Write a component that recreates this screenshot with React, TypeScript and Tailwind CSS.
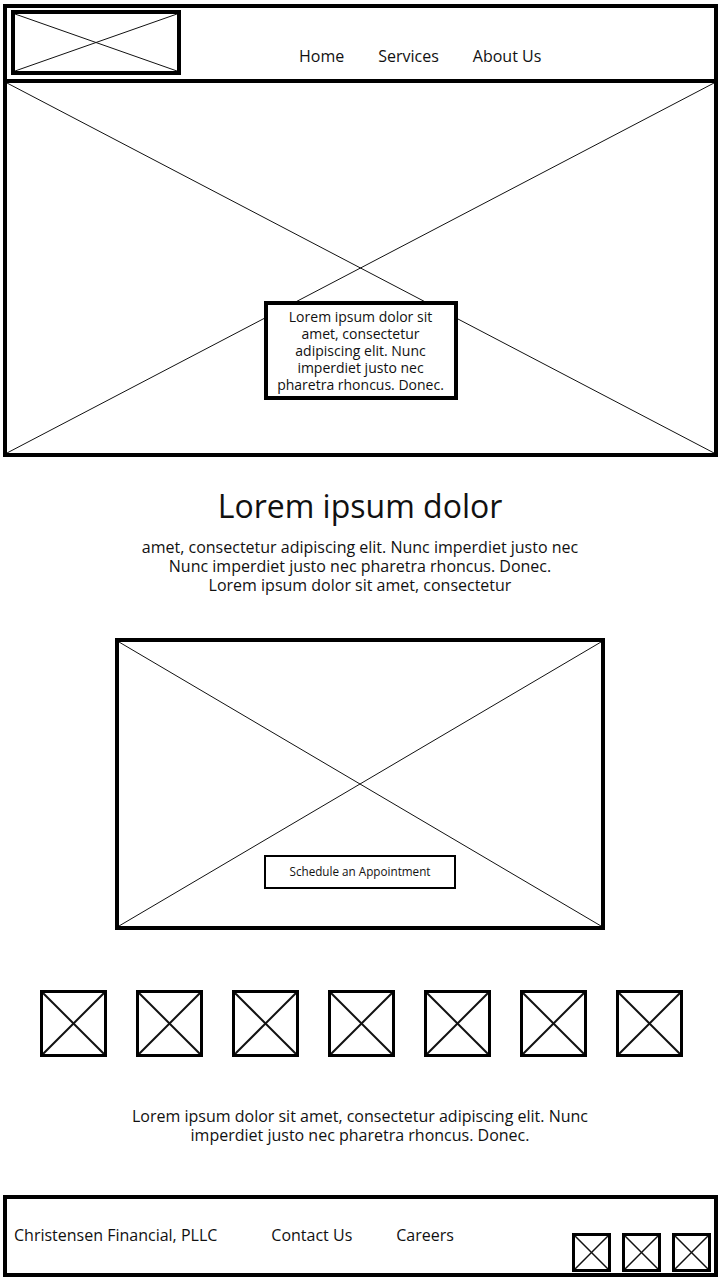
import type { ReactNode } from 'react'

function Cross({ stroke = 1 }: { stroke?: number }) {
  return (
    <svg className="absolute inset-0 h-full w-full" preserveAspectRatio="none" viewBox="0 0 100 100">
      <line x1="0" y1="0" x2="100" y2="100" stroke="#111" strokeWidth={stroke} vectorEffect="non-scaling-stroke" />
      <line x1="100" y1="0" x2="0" y2="100" stroke="#111" strokeWidth={stroke} vectorEffect="non-scaling-stroke" />
    </svg>
  )
}

function Placeholder({ className, stroke, children }: { className: string; stroke?: number; children?: ReactNode }) {
  return (
    <div className={`relative border-black bg-white ${className}`}>
      <Cross stroke={stroke} />
      {children}
    </div>
  )
}

const icons = [0, 1, 2, 3, 4, 5, 6]

export default function App() {
  return (
    <div className="min-h-[1280px] w-[720px] bg-white text-[#111]" style={{ fontFamily: '"Open Sans", "Liberation Sans", sans-serif' }}>
      <div className="ml-[3px] w-[715px] pt-[4px]">
        {/* header */}
        <header className="flex h-[79px] border-4 border-black pl-[4px]">
          <Placeholder className="mt-[2px] h-[65px] w-[170px] border-4" />
          <nav className="ml-[118px] mt-[37px] flex h-[22px] gap-[34px] text-[16px] leading-[22px]">
            <span>Home</span>
            <span>Services</span>
            <span>About Us</span>
          </nav>
        </header>

        {/* hero */}
        <Placeholder className="flex h-[374px] items-end justify-center border-x-4 border-b-4 pb-[53px]">
          <div className="relative w-[194px] border-4 border-black bg-white px-[4px] py-[3px] text-center text-[14px] leading-[17px]">
            Lorem ipsum dolor sit amet, consectetur adipiscing elit. Nunc imperdiet justo nec pharetra rhoncus. Donec.
          </div>
        </Placeholder>
      </div>

      <h1 className="mt-[29px] text-center text-[32px] leading-[40px]">Lorem ipsum dolor</h1>
      <p className="mt-[12px] text-center text-[16px] leading-[19px]">
        amet, consectetur adipiscing elit. Nunc imperdiet justo nec
        <br />
        Nunc imperdiet justo nec pharetra rhoncus. Donec.
        <br />
        Lorem ipsum dolor sit amet, consectetur
      </p>

      <Placeholder className="ml-[115px] mt-[43px] flex h-[292px] w-[490px] items-end justify-center border-4 pb-[37px]">
        <div className="relative flex h-[34px] w-[192px] items-center justify-center border-2 border-black bg-white text-[11.7px]">
          Schedule an Appointment
        </div>
      </Placeholder>

      <div className="mt-[60px] flex justify-center gap-[29px] pl-[2px]">
        {icons.map((i) => (
          <Placeholder key={i} className="h-[67px] w-[67px] border-[3px]" stroke={2} />
        ))}
      </div>

      <p className="mt-[50px] text-center text-[16px] leading-[19px]">
        Lorem ipsum dolor sit amet, consectetur adipiscing elit. Nunc
        <br />
        imperdiet justo nec pharetra rhoncus. Donec.
      </p>

      {/* footer */}
      <footer className="ml-[3px] mt-[50px] flex h-[82px] w-[715px] border-4 border-black pl-[7px] pr-[3px] pb-[1px]">
        <div className="mt-[25px] flex h-[22px] text-[16px] leading-[22px]">
          <span>Christensen Financial, PLLC</span>
          <span className="ml-[54px]">Contact Us</span>
          <span className="ml-[44px]">Careers</span>
        </div>
        <div className="ml-auto flex gap-[11px] self-end">
          {[0, 1, 2].map((i) => (
            <Placeholder key={i} className="h-[39px] w-[39px] border-[3px]" stroke={1.5} />
          ))}
        </div>
      </footer>
    </div>
  )
}
